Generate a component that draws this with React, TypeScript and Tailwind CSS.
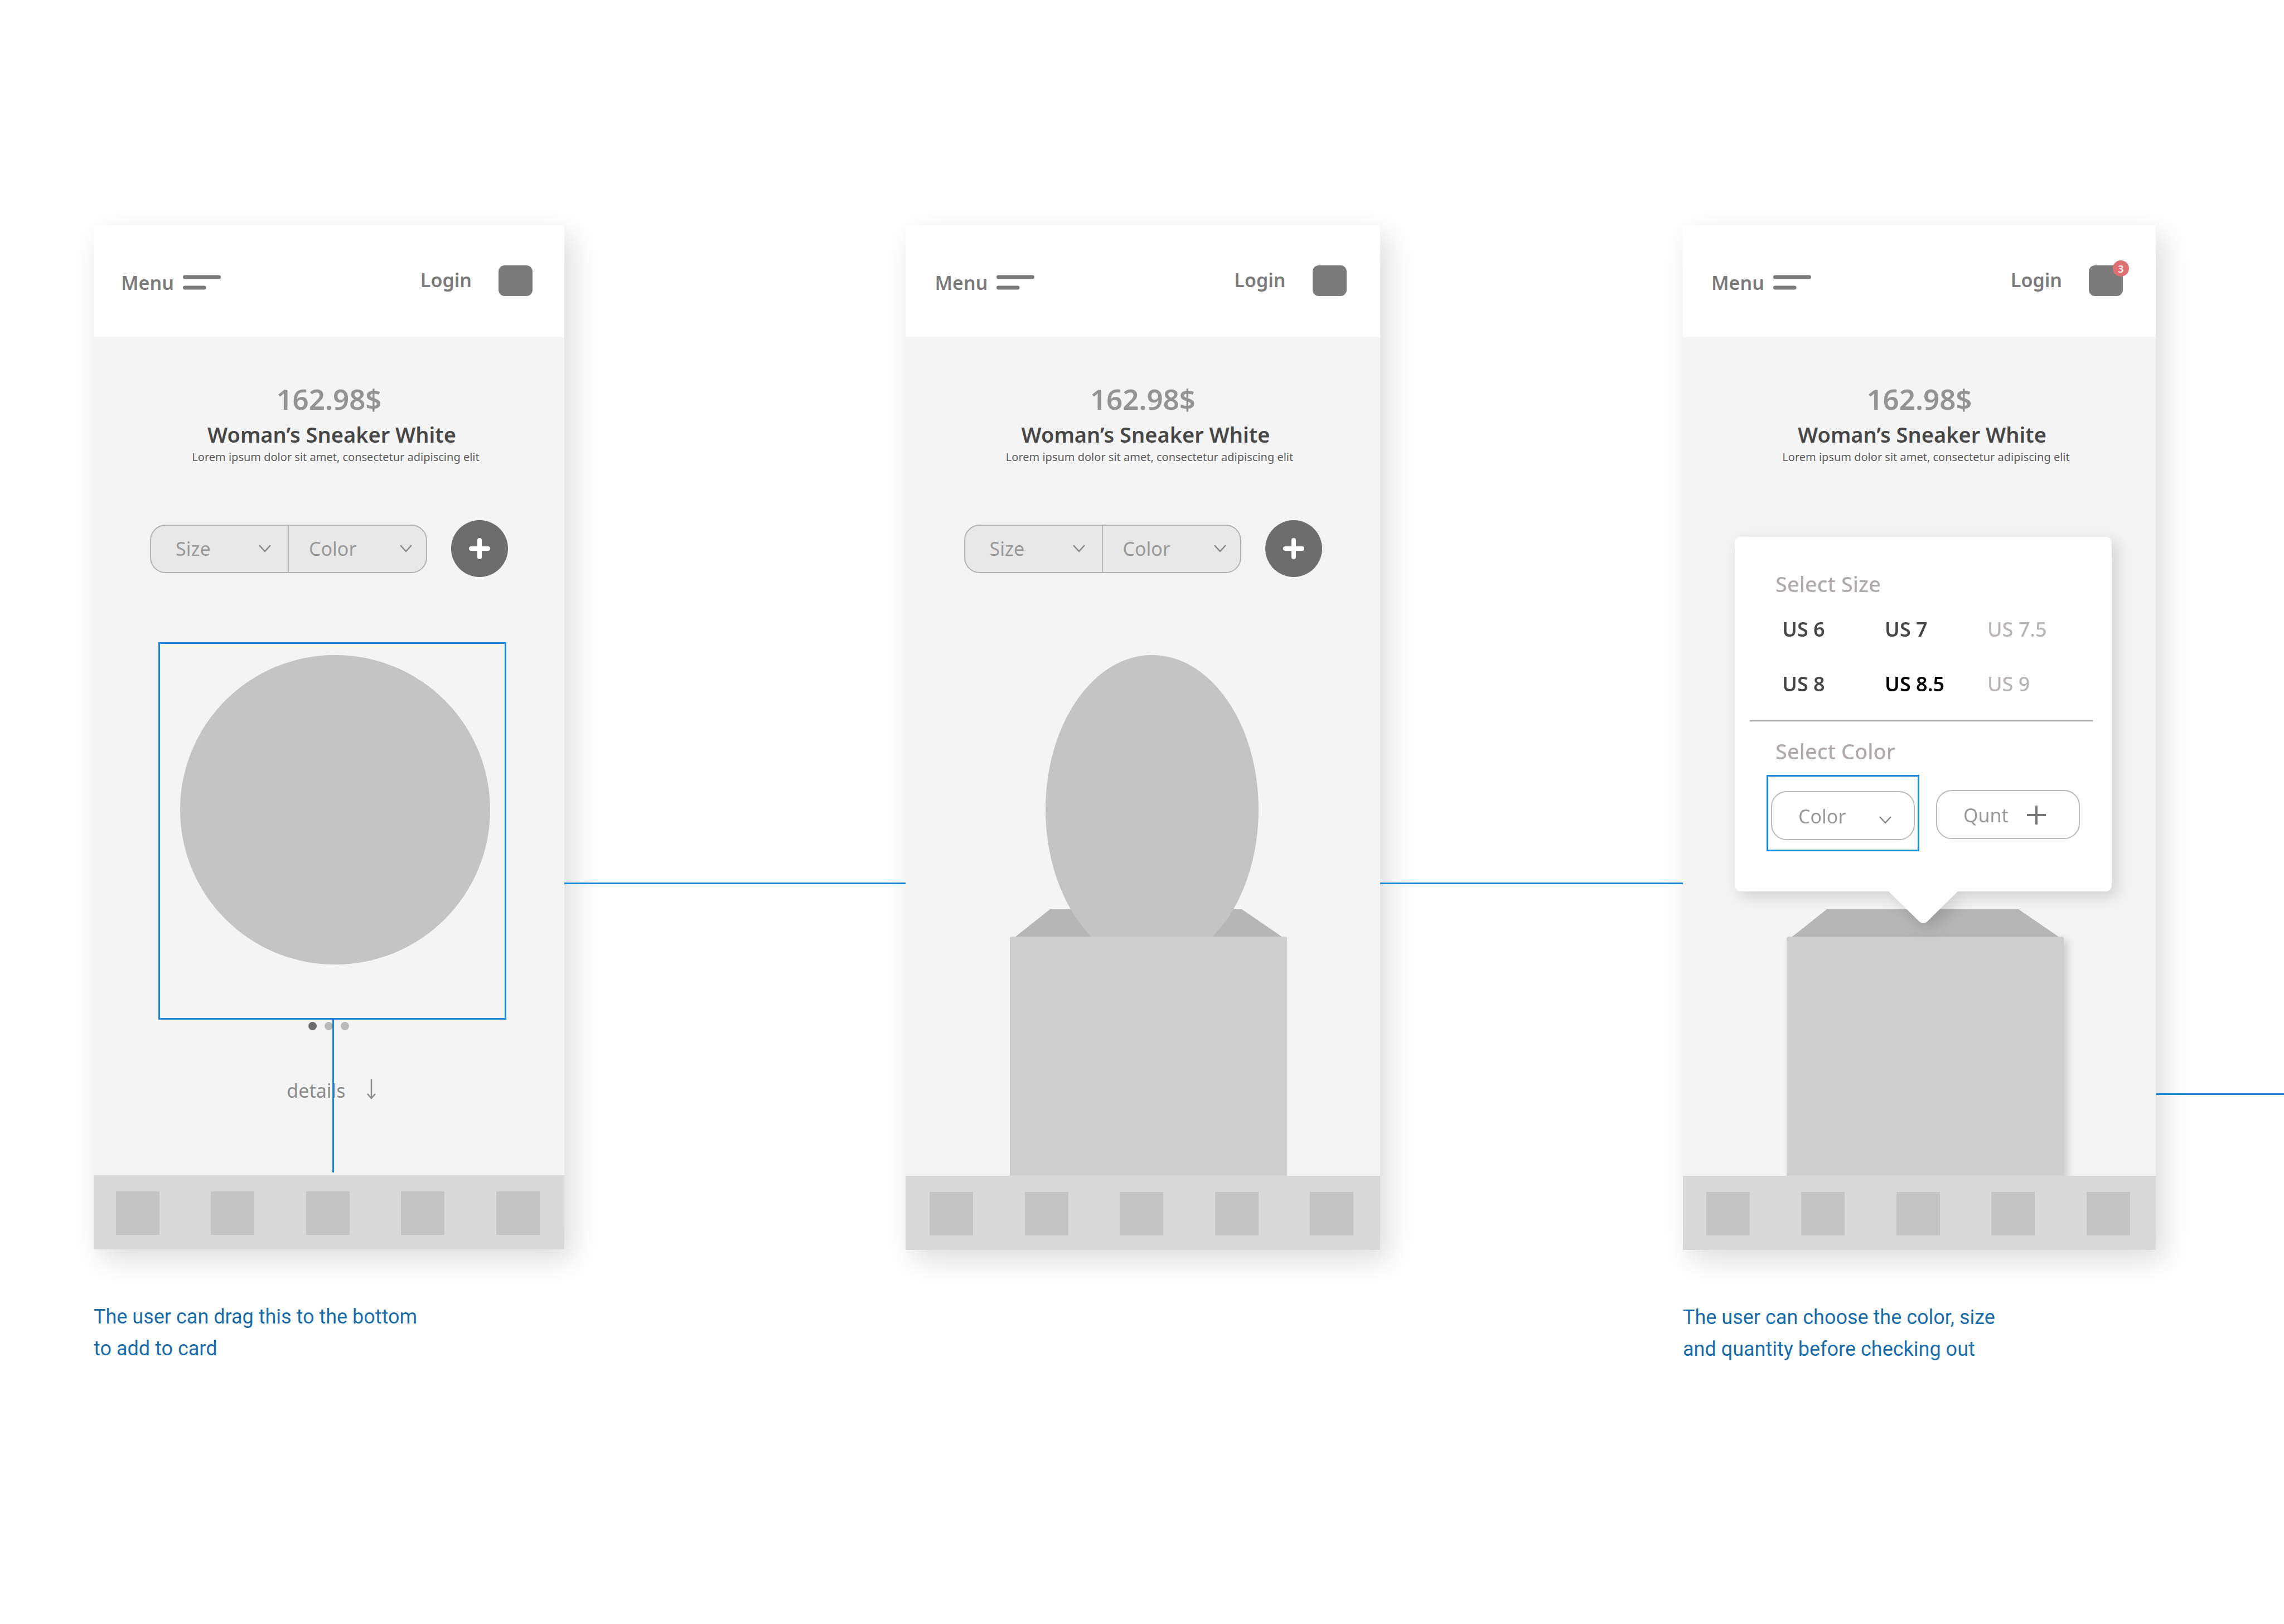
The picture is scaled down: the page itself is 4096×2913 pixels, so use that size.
import React from "react";

const NOTO = "font-['Noto_Sans',sans-serif]";

function Chevron() {
  return (
    <svg viewBox="0 0 22 14" className="h-[14px] w-[22px] shrink-0" fill="none" stroke="#858585" strokeWidth="2.5" aria-hidden="true">
      <path d="M1 1 L11 12 L21 1" />
    </svg>
  );
}

function Header({ badge }: { badge?: string }) {
  return (
    <header className="flex h-[201px] justify-center bg-white text-[34px] leading-[46px] font-semibold text-[#7b7b7b]">
      <div className="flex w-[746px] items-start pt-[72px] pr-[8px]">
        <button type="button" className="flex items-center gap-[16px] pt-[8px]">
          Menu
          <svg viewBox="0 0 68 28" className="h-[28px] w-[68px]" fill="none" stroke="#7b7b7b" strokeWidth="7" strokeLinecap="round" aria-hidden="true">
            <path d="M3.5 4 H64.5 M3.5 23 H38" />
          </svg>
        </button>
        <a href="#login" className="mt-[3px] ml-auto">Login</a>
        <button type="button" aria-label="Cart" className="relative ml-[48px] h-[55px] w-[61px] rounded-[11px] bg-[#7b7b7b]">
          {badge && (
            <span className="absolute -top-[9px] -right-[11px] flex h-[29px] w-[29px] items-center justify-center rounded-full bg-[#dd7073] text-[18px] leading-none font-semibold text-white">
              {badge}
            </span>
          )}
        </button>
      </div>
    </header>
  );
}

function Product() {
  return (
    <div className="flex flex-col items-center pt-[76px]">
      <p className="text-[51px] leading-[68px] font-semibold text-[#939393]">162.98$</p>
      <h2 className="mt-[5px] pl-[10px] text-[38px] leading-[50px] font-semibold text-[#474747]">Woman’s Sneaker White</h2>
      <p className="pl-[24px] text-[20px] leading-[32px] text-[#5c5c5c]">Lorem ipsum dolor sit amet, consectetur adipiscing elit</p>
    </div>
  );
}

function Picker() {
  return (
    <div className="mt-[97px] flex items-center justify-center gap-[43px] text-[34px] leading-[46px] text-[#999999]">
      <div className="flex h-[87px] w-[497px] divide-x-2 divide-[#b3b3b3] overflow-hidden rounded-[28px] border-2 border-[#b3b3b3] bg-[#e8e8e8]">
        <button type="button" className="flex w-[247px] items-center justify-between pr-[30px] pl-[44px]">
          Size
          <Chevron />
        </button>
        <button type="button" className="flex flex-1 items-center justify-between pr-[25px] pl-[36px]">
          Color
          <Chevron />
        </button>
      </div>
      <button type="button" aria-label="Add to cart" className="flex h-[102px] w-[102px] items-center justify-center rounded-full bg-[#6d6d6d]">
        <svg viewBox="0 0 38 38" className="h-[38px] w-[38px]" stroke="#ffffff" strokeWidth="8" strokeLinecap="round" aria-hidden="true">
          <path d="M19 4 V34 M4 19 H34" />
        </svg>
      </button>
    </div>
  );
}

const TABS = ["Home", "Search", "Shop", "Saved", "Account"];

function TabBar() {
  return (
    <nav className="flex h-[133px] shrink-0 justify-center bg-[#d9d9d9] pr-[5px]">
      <div className="flex w-[760px] justify-between pt-[29px]">
        {TABS.map((tab) => (
          <button key={tab} type="button" aria-label={tab} className="h-[78px] w-[78px] bg-[#c4c4c4]" />
        ))}
      </div>
    </nav>
  );
}

function Phone({ badge, children }: { badge?: string; children: React.ReactNode }) {
  return (
    <section className="flex min-h-[1837px] flex-col bg-[#f4f4f4] shadow-[14px_18px_50px_rgba(0,0,0,0.14)]">
      <Header badge={badge} />
      <Product />
      {children}
      <TabBar />
    </section>
  );
}

function Crate({ item }: { item?: boolean }) {
  return (
    <svg viewBox="0 0 540 935" className="block h-[935px] w-[540px]" aria-hidden="true">
      <defs>
        <filter id="crate-shadow" x="-20%" y="-20%" width="140%" height="140%">
          <feDropShadow dx="7" dy="6" stdDeviation="7" floodColor="#000000" floodOpacity="0.16" />
        </filter>
      </defs>
      <path d="M30 507 L93 457 H437 L510 507 Z" fill="#b6b6b6" />
      {item && <ellipse cx="276" cy="278" rx="191" ry="277" fill="#c4c4c4" />}
      <path
        d="M24 506 H515 Q518 506 518 509 V960 H21 V509 Q21 506 24 506 Z"
        fill="#cecece"
        filter={item ? undefined : "url(#crate-shadow)"}
      />
    </svg>
  );
}

function Connector({ drop }: { drop: "upper" | "lower" }) {
  return (
    <div className={drop === "upper" ? "pt-[1179px]" : "pt-[1557px]"}>
      <div className="h-[3px] bg-[#1b85d6]" />
    </div>
  );
}

function Caption({ children }: { children: React.ReactNode }) {
  return <p className="mt-[93px] font-[Roboto,sans-serif] text-[36px] leading-[57px] whitespace-nowrap text-[#1a6dab]">{children}</p>;
}

const SIZES = [
  { label: "US 6", tone: "font-semibold text-[#474747]" },
  { label: "US 7", tone: "font-semibold text-[#474747]" },
  { label: "US 7.5", tone: "font-medium text-[#b9b5b5]" },
  { label: "US 8", tone: "font-semibold text-[#474747]" },
  { label: "US 8.5", tone: "font-semibold text-black" },
  { label: "US 9", tone: "font-medium text-[#b9b5b5]" },
];

function OptionsDialog() {
  return (
    <div role="dialog" aria-label="Product options" className="absolute -top-[211px] left-1/2 ml-[7px] w-[676px] -translate-x-1/2 drop-shadow-[9px_9px_14px_rgba(0,0,0,0.15)]">
      <div className="h-[636px] rounded-[11px] bg-white pt-[59px] pr-[34px] pl-[27px]">
        <h3 className="pl-[46px] text-[38px] leading-[50px] font-medium text-[#b1aaaa]">Select Size</h3>
        <div className="mt-[32px] grid grid-cols-[184px_184px_184px] gap-y-[48px] pl-[58px] text-[36px] leading-[50px]">
          {SIZES.map((size) => (
            <button key={size.label} type="button" className={"text-left " + size.tone}>{size.label}</button>
          ))}
        </div>
        <hr className="mt-[40px] h-[2px] border-0 bg-[#9c9c9c]" />
        <h3 className="mt-[28px] pl-[46px] text-[38px] leading-[50px] font-medium text-[#b1aaaa]">Select Color</h3>
        <div className="mt-[18px] flex pl-[30px] text-[34px] leading-[46px] text-[#999999]">
          <div className="flex h-[137px] w-[274px] shrink-0 items-start justify-center border-[3px] border-[#1b85d6] pt-[26px]">
            <button type="button" className="flex h-[88px] w-[258px] items-center justify-between rounded-[28px] border-2 border-[#bababa] pt-[2px] pr-[40px] pl-[47px]">
              Color
              <span className="pt-[14px]">
                <Chevron />
              </span>
            </button>
          </div>
          <button type="button" className="mt-[27px] ml-[30px] flex h-[88px] w-[258px] shrink-0 items-center justify-between rounded-[28px] border-2 border-[#bababa] pt-[2px] pr-[59px] pl-[47px]">
            Qunt
            <svg viewBox="0 0 34 34" className="h-[34px] w-[34px]" stroke="#777777" strokeWidth="4" aria-hidden="true">
              <path d="M17 0 V34 M0 17 H34" />
            </svg>
          </button>
        </div>
      </div>
      <svg viewBox="0 0 126 58" className="mx-auto block h-[58px] w-[126px]" fill="#ffffff" aria-hidden="true">
        <path d="M0 -1 H126 L70 54 Q63 60 56 54 Z" />
      </svg>
    </div>
  );
}

export default function App() {
  return (
    <main className={"grid min-h-screen grid-cols-[168fr_844fr_612fr_851fr_543fr_848fr_230fr] overflow-hidden bg-white pt-[404px] " + NOTO}>
      <div />
      <div>
        <Phone>
          <Picker />
          <div className="relative mt-[117px] ml-[116px] flex h-[677px] w-[624px] justify-center border-[3px] border-[#1b85d6] pt-[20px] pl-[10px]">
            <div className="h-[555px] w-[556px] rounded-full bg-[#c4c4c4]" />
            <div className="absolute top-full left-1/2 z-10 h-[277px] w-[3px] bg-[#1b85d6]" />
          </div>
          <div className="mt-[4px] flex justify-center gap-[14px] pr-[2px]">
            <span className="h-[15px] w-[15px] rounded-full bg-[#6d6d6d]" />
            <span className="h-[15px] w-[15px] rounded-full bg-[#bababa]" />
            <span className="h-[15px] w-[15px] rounded-full bg-[#bababa]" />
          </div>
          <button type="button" className="mt-[85px] mb-auto flex justify-center gap-[38px] pl-[8px] text-[34px] leading-[46px] text-[#8c8c8c]">
            details
            <svg viewBox="0 0 16 36" className="mt-[3px] h-[36px] w-[16px]" fill="none" stroke="#8a8a8a" strokeWidth="2.5" aria-hidden="true">
              <path d="M8 0 V33 M1 26 L8 34 L15 26" />
            </svg>
          </button>
        </Phone>
        <Caption>
          The user can drag this to the bottom
          <br />
          to add to card
        </Caption>
      </div>
      <Connector drop="upper" />
      <div>
        <Phone>
          <Picker />
          <div className="mt-[139px] flex h-[935px] justify-center pl-[21px]">
            <Crate item />
          </div>
        </Phone>
      </div>
      <Connector drop="upper" />
      <div>
        <Phone badge="3">
          <div className="relative mt-[338px] flex h-[935px] justify-center pl-[21px]">
            <Crate />
            <OptionsDialog />
          </div>
        </Phone>
        <Caption>
          The user can choose the color, size
          <br />
          and quantity before checking out
        </Caption>
      </div>
      <Connector drop="lower" />
    </main>
  );
}
